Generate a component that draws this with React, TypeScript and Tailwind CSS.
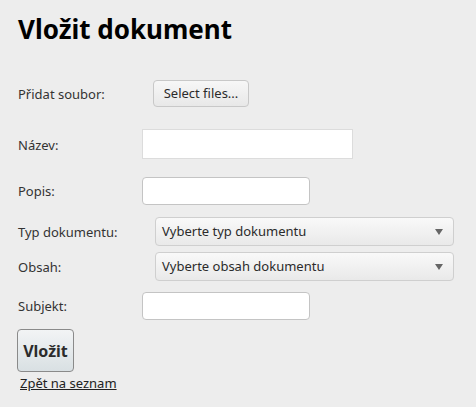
import React from 'react';

const font = { fontFamily: '"Noto Sans", "Open Sans", sans-serif' };

const SelectBox: React.FC<{ text: string }> = ({ text }) => (
  <div className="flex h-[29px] w-[299px] items-center justify-between rounded-[4px] border border-[#cfcfcf] bg-gradient-to-b from-[#f9f9f9] to-[#e9e9e9] pl-[6px] pr-[10px] text-[13px] text-[#2b2b2b]">
    <span>{text}</span>
    <svg width="8" height="6" viewBox="0 0 8 6">
      <path d="M0 0 L8 0 L4 6 Z" fill="#666" />
    </svg>
  </div>
);

export default function App() {
  return (
    <div className="min-h-[407px] w-[476px] bg-[#ededed] pl-[18px] pt-[12px] text-[#333]" style={font}>
      <h1 className="text-[26px] font-bold leading-[34px] text-black">Vložit dokument</h1>

      <div className="mt-[34px] flex h-[27px] items-center text-[13px]">
        <span className="w-[135px] pt-[3px]">Přidat soubor:</span>
        <button className="h-[27px] w-[96px] rounded-[4px] border border-[#c8c8c8] bg-gradient-to-b from-[#f7f7f7] to-[#e8e8e8] text-[13px] text-[#2b2b2b]">
          Select files...
        </button>
      </div>

      <div className="mt-[22px] flex h-[30px] items-center text-[13px]">
        <span className="w-[124px] pt-[3px]">Název:</span>
        <div className="h-[30px] w-[211px] border border-[#dcdcdc] bg-white" />
      </div>

      <div className="mt-[18px] flex h-[28px] items-center text-[13px]">
        <span className="w-[124px] pt-[2px]">Popis:</span>
        <div className="h-[28px] w-[168px] rounded-[4px] border border-[#c4c4c4] bg-white" />
      </div>

      <div className="mt-[12px] flex items-center text-[13px]">
        <span className="w-[137px] pt-[2px]">Typ dokumentu:</span>
        <SelectBox text="Vyberte typ dokumentu" />
      </div>

      <div className="mt-[6px] flex items-center text-[13px]">
        <span className="w-[137px] pt-[2px]">Obsah:</span>
        <SelectBox text="Vyberte obsah dokumentu" />
      </div>

      <div className="mt-[11px] flex h-[28px] items-center text-[13px]">
        <span className="w-[124px] pt-[2px]">Subjekt:</span>
        <div className="h-[28px] w-[168px] rounded-[4px] border border-[#c4c4c4] bg-white" />
      </div>

      <button className="ml-[-1px] mt-[9px] block h-[43px] w-[57px] rounded-[4px] border border-[#8a8a8a] bg-gradient-to-b from-[#f2f4f5] to-[#d9e0e3] text-[16px] font-bold text-[#2b2b2b]">
        Vložit
      </button>
      <a href="#" className="ml-[2px] mt-[2px] block text-[13px] text-[#222] underline">
        Zpět na seznam
      </a>
    </div>
  );
}
